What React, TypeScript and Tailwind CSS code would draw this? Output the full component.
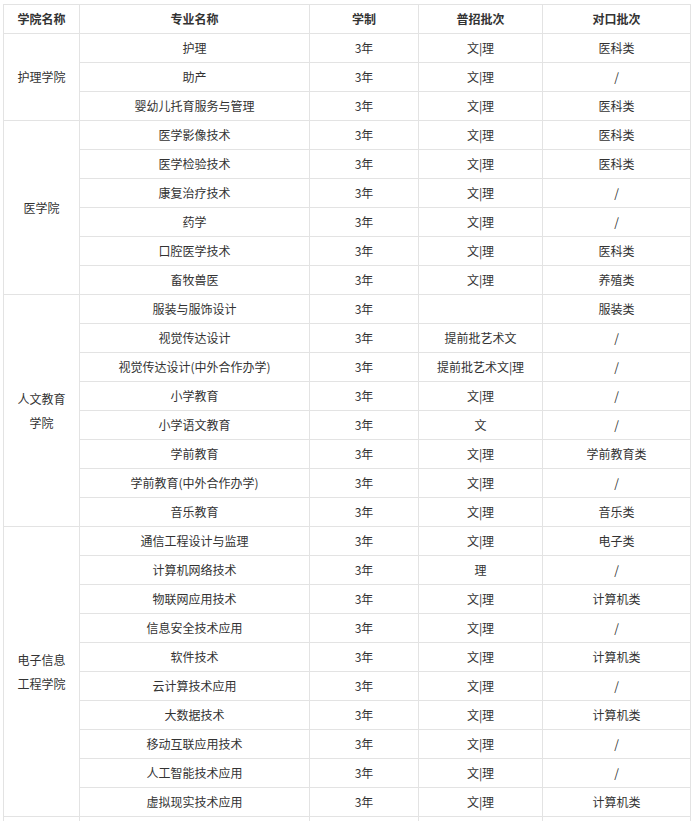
import React from 'react';

interface Major {
  name: string;
  years: string;
  general: string;
  counterpart: string;
}

interface College {
  name: string[];
  majors: Major[];
}

const m = (name: string, general: string, counterpart: string, years = '3年'): Major => ({
  name,
  years,
  general,
  counterpart,
});

const colleges: College[] = [
  {
    name: ['护理学院'],
    majors: [
      m('护理', '文|理', '医科类'),
      m('助产', '文|理', '/'),
      m('婴幼儿托育服务与管理', '文|理', '医科类'),
    ],
  },
  {
    name: ['医学院'],
    majors: [
      m('医学影像技术', '文|理', '医科类'),
      m('医学检验技术', '文|理', '医科类'),
      m('康复治疗技术', '文|理', '/'),
      m('药学', '文|理', '/'),
      m('口腔医学技术', '文|理', '医科类'),
      m('畜牧兽医', '文|理', '养殖类'),
    ],
  },
  {
    name: ['人文教育', '学院'],
    majors: [
      m('服装与服饰设计', '', '服装类'),
      m('视觉传达设计', '提前批艺术文', '/'),
      m('视觉传达设计(中外合作办学)', '提前批艺术文|理', '/'),
      m('小学教育', '文|理', '/'),
      m('小学语文教育', '文', '/'),
      m('学前教育', '文|理', '学前教育类'),
      m('学前教育(中外合作办学)', '文|理', '/'),
      m('音乐教育', '文|理', '音乐类'),
    ],
  },
  {
    name: ['电子信息', '工程学院'],
    majors: [
      m('通信工程设计与监理', '文|理', '电子类'),
      m('计算机网络技术', '理', '/'),
      m('物联网应用技术', '文|理', '计算机类'),
      m('信息安全技术应用', '文|理', '/'),
      m('软件技术', '文|理', '计算机类'),
      m('云计算技术应用', '文|理', '/'),
      m('大数据技术', '文|理', '计算机类'),
      m('移动互联应用技术', '文|理', '/'),
      m('人工智能技术应用', '文|理', '/'),
      m('虚拟现实技术应用', '文|理', '计算机类'),
    ],
  },
  {
    // next group continues below the visible area
    name: [''],
    majors: [m('', '', '', ''), m('', '', '', '')],
  },
];

const cell = 'border border-[#e3e3e3] h-[29px] p-0 text-center align-middle leading-[28px]';

export default function App() {
  return (
    <div
      className="bg-white pt-[4px] pl-[3px] text-[12px] text-[#333]"
      style={{ fontFamily: '"Noto Sans CJK SC", "Noto Sans", sans-serif' }}
    >
      <table className="table-fixed border-collapse w-[687px]">
        <colgroup>
          <col className="w-[76px]" />
          <col className="w-[230px]" />
          <col className="w-[109px]" />
          <col className="w-[124px]" />
          <col className="w-[148px]" />
        </colgroup>
        <thead>
          <tr>
            <th className={`${cell} font-bold`}>学院名称</th>
            <th className={`${cell} font-bold`}>专业名称</th>
            <th className={`${cell} font-bold`}>学制</th>
            <th className={`${cell} font-bold`}>普招批次</th>
            <th className={`${cell} font-bold`}>对口批次</th>
          </tr>
        </thead>
        <tbody>
          {colleges.map((college, ci) =>
            college.majors.map((major, mi) => (
              <tr key={`${ci}-${mi}`}>
                {mi === 0 && (
                  <td
                    rowSpan={college.majors.length}
                    className="border border-[#e3e3e3] p-0 text-center align-middle leading-6"
                  >
                    {college.name.map((line, li) => (
                      <div key={li}>{line}</div>
                    ))}
                  </td>
                )}
                <td className={cell}>{major.name}</td>
                <td className={cell}>{major.years}</td>
                <td className={cell}>{major.general}</td>
                <td className={cell}>{major.counterpart}</td>
              </tr>
            ))
          )}
        </tbody>
      </table>
    </div>
  );
}
